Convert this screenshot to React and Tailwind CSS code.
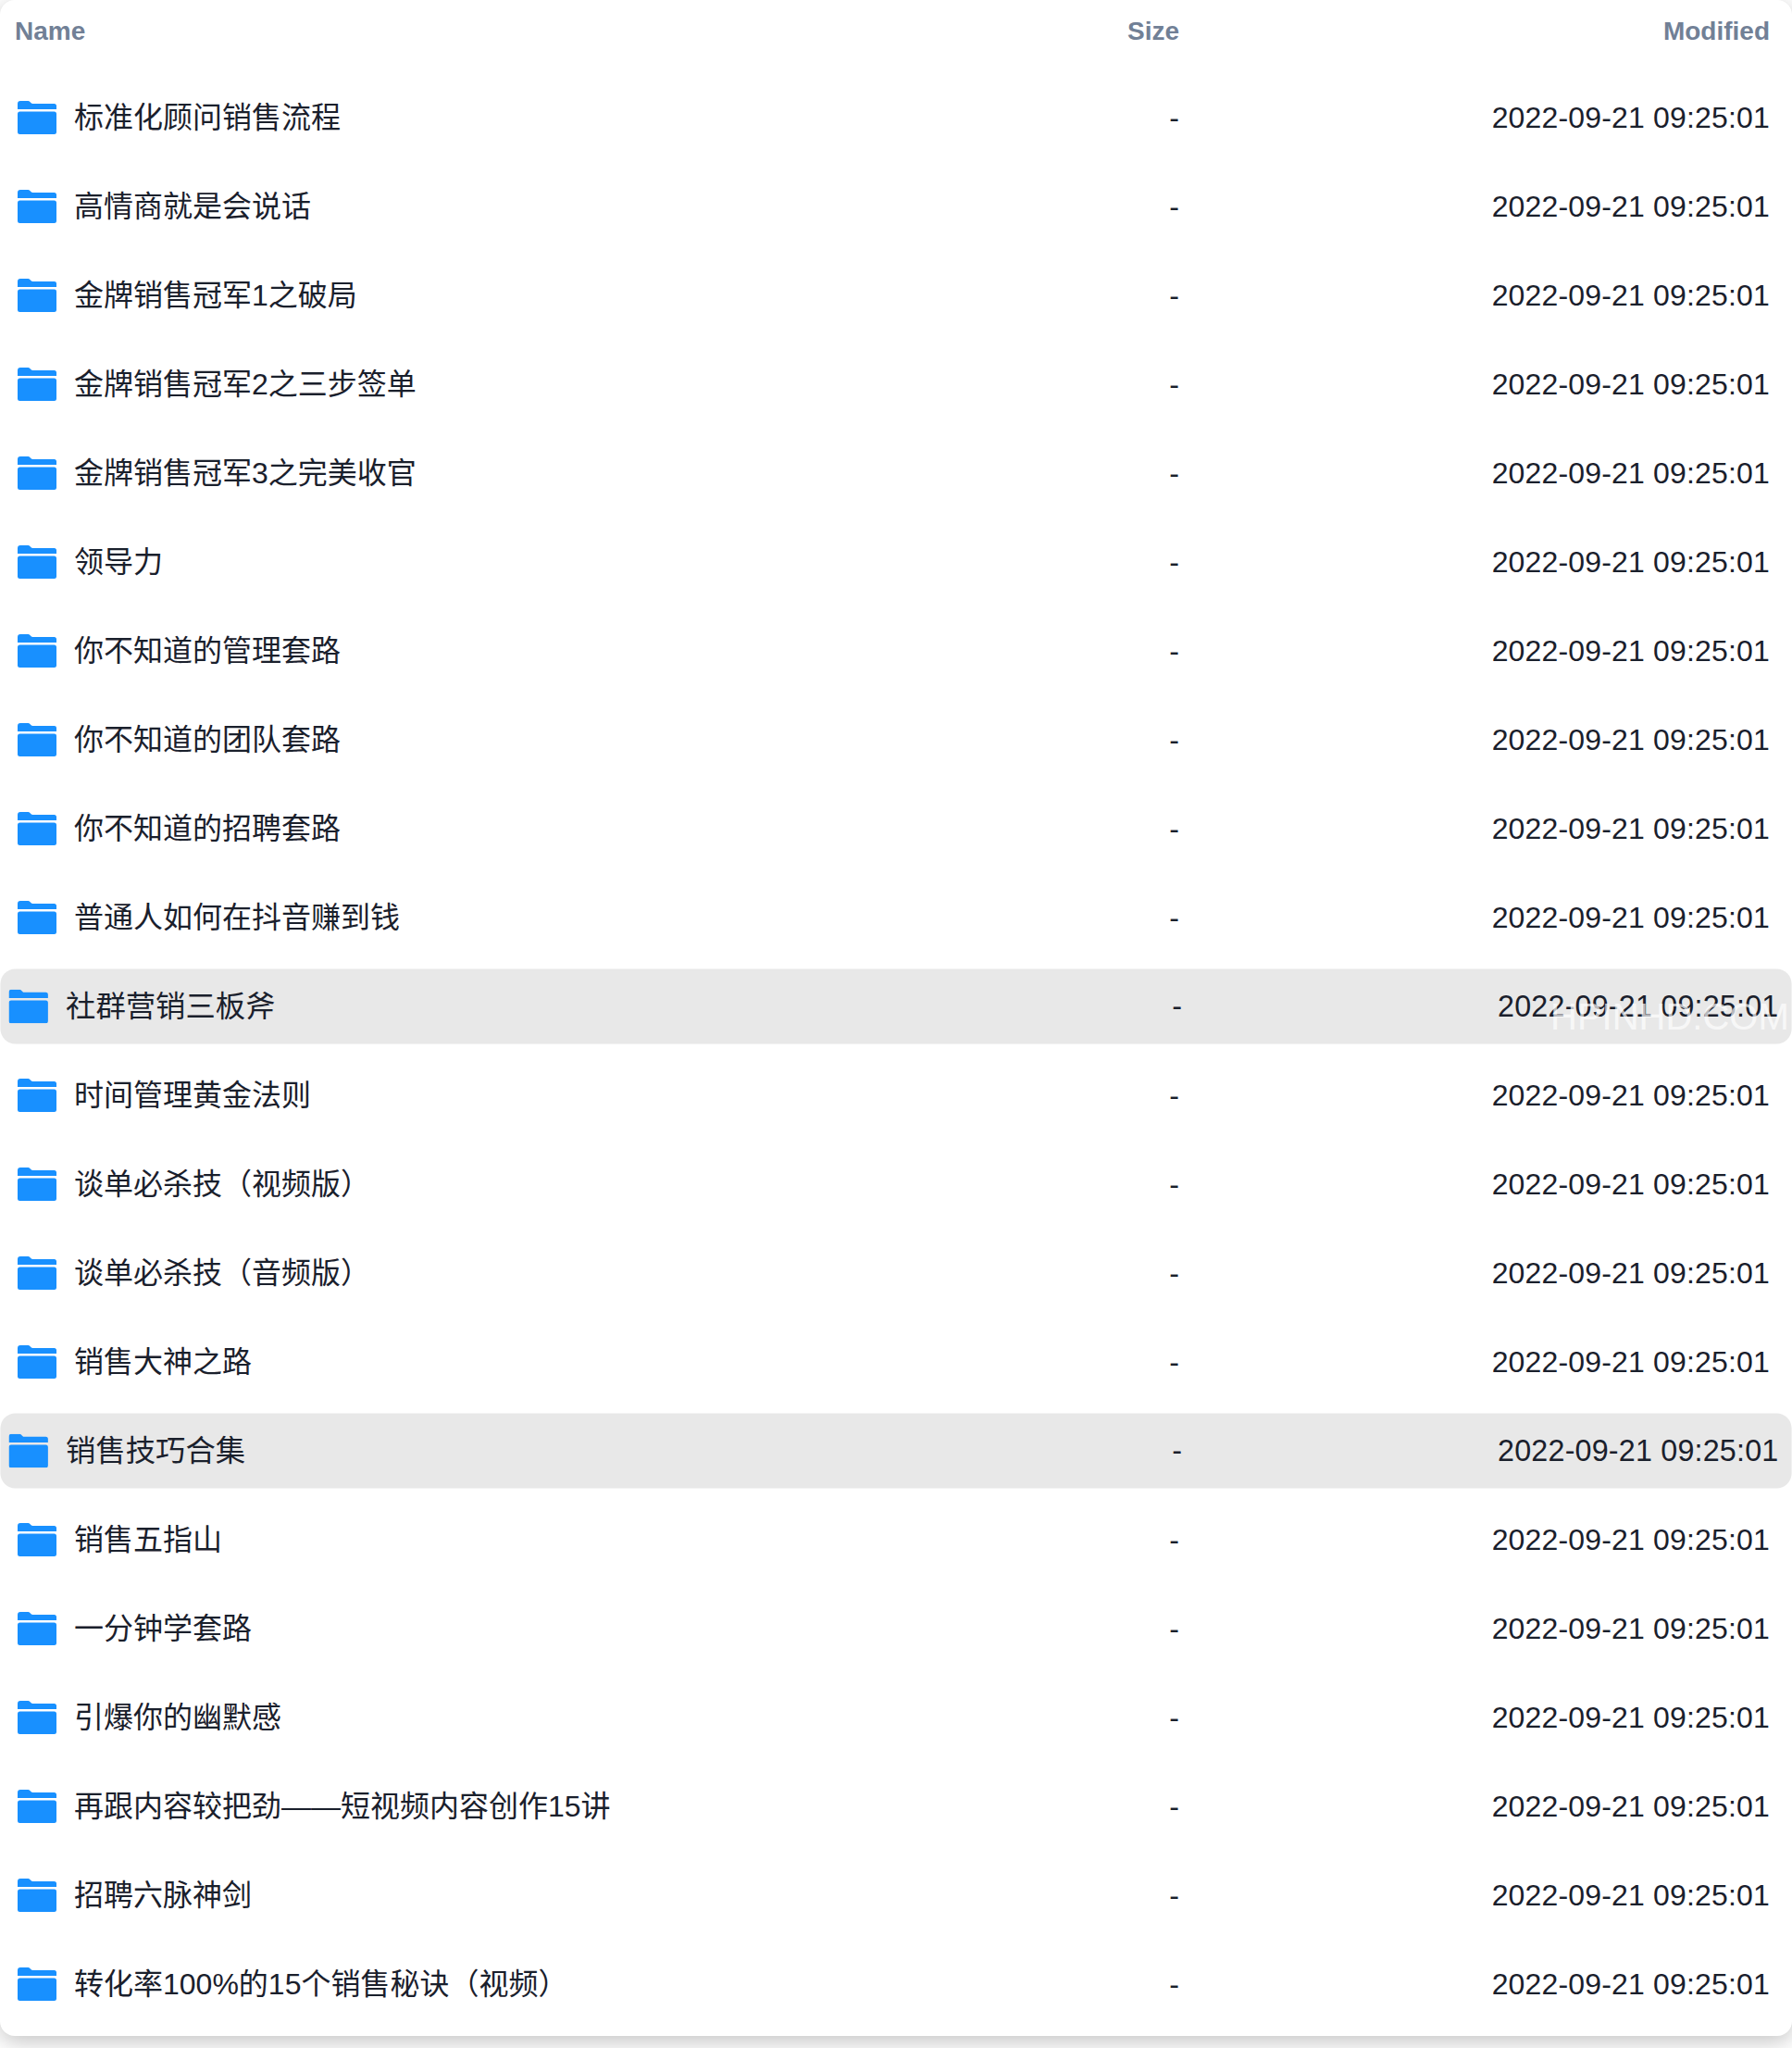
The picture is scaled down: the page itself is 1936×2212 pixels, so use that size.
const rows = [
  "标准化顾问销售流程",
  "高情商就是会说话",
  "金牌销售冠军1之破局",
  "金牌销售冠军2之三步签单",
  "金牌销售冠军3之完美收官",
  "领导力",
  "你不知道的管理套路",
  "你不知道的团队套路",
  "你不知道的招聘套路",
  "普通人如何在抖音赚到钱",
  "社群营销三板斧",
  "时间管理黄金法则",
  "谈单必杀技（视频版）",
  "谈单必杀技（音频版）",
  "销售大神之路",
  "销售技巧合集",
  "销售五指山",
  "一分钟学套路",
  "引爆你的幽默感",
  "再跟内容较把劲——短视频内容创作15讲",
  "招聘六脉神剑",
  "转化率100%的15个销售秘诀（视频）",
];

const hovered = ["社群营销三板斧", "销售技巧合集"];

function FolderIcon() {
  return (
    <svg viewBox="0 0 42 36" className="w-[42px] h-9 shrink-0" fill="#1890ff">
      <path d="M0 9V3a3 3 0 0 1 3-3h8.5c2.2 0 2.6 3 4.8 3H39.5A2.5 2.5 0 0 1 42 5.5V9z" />
      <path d="M0 14a2.5 2.5 0 0 1 2.5-2.5h37A2.5 2.5 0 0 1 42 14v19.5a2.5 2.5 0 0 1-2.5 2.5h-37A2.5 2.5 0 0 1 0 33.5z" />
    </svg>
  );
}

function Row({ name }) {
  const active = hovered.includes(name);
  return (
    <div
      className={
        "mx-[10px] h-20 flex items-center pl-[9px] pr-[14px] rounded-2xl " +
        (active ? "bg-[#e8e8e8] scale-[1.01]" : "")
      }
    >
      <div className="flex-1 flex items-center gap-[19px]">
        <FolderIcon />
        <span>{name}</span>
      </div>
      <div className="w-[100px] text-right">-</div>
      <div className="w-[638px] text-right tracking-[0.17px]">2022-09-21 09:25:01</div>
    </div>
  );
}

export default function App() {
  return (
    <div className="relative h-[2212px] overflow-hidden bg-white font-['Liberation_Sans','Noto_Sans_CJK_SC',sans-serif] text-[32px] leading-[48px] text-[#1a202c]">
      <div className="flex flex-col gap-4 rounded-2xl bg-white pb-4 shadow-[0_6px_24px_rgba(0,0,0,0.24)]">
        <div className="h-[71px] flex items-start pt-[13px] pl-[16px] pr-[24px] text-[28px] leading-[42px] font-bold text-[#718096]">
          <div className="flex-1">Name</div>
          <div className="w-[100px] text-right">Size</div>
          <div className="w-[638px] text-right">Modified</div>
        </div>
        {rows.map((name) => (
          <Row key={name} name={name} />
        ))}
      </div>
      <div className="absolute left-[1675px] top-[1074px] text-[40px] leading-[48px] text-white/70">HPINHD.COM</div>
    </div>
  );
}
